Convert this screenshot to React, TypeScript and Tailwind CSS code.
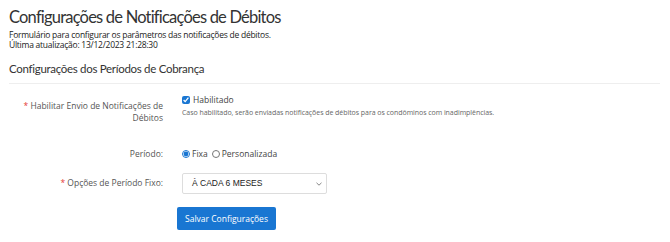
export default function App() {
  return (
    <div className="w-[670px] h-[242px] overflow-hidden bg-white text-[#333]" style={{ fontFamily: '"Open Sans", sans-serif' }}>
      <div className="pl-[9px] pr-[10px] pt-[6px]">
        <h1 className="text-[16.5px] leading-[22px] tracking-[-0.8px] text-[#333]" style={{ fontFamily: "Lato, sans-serif" }}>
          Configurações de Notificações de Débitos
        </h1>
        <p className="mt-[2px] text-[8.5px] leading-[10px] tracking-[-0.25px] text-[#222]">
          Formulário para configurar os parâmetros das notificações de débitos.
          <br />
          Última atualização: 13/12/2023 21:28:30
        </p>
        <h2 className="mt-[12px] text-[11.5px] leading-[14px] tracking-[-0.3px] text-[#333]" style={{ fontFamily: "Lato, sans-serif" }}>
          Configurações dos Períodos de Cobrança
        </h2>
        <div className="mt-[7px] h-px bg-[#eeeeee]" />

        <div className="mt-[10px] grid grid-cols-[154px_1fr] gap-x-[19px]">
          <div className="pt-[6px] text-right text-[8.5px] leading-[12px] text-[#555]">
            <span className="text-[#e53935]">*</span> Habilitar Envio de Notificações de Débitos
          </div>
          <div>
            <label className="flex items-center gap-[3px] text-[8.5px] leading-[12px] text-[#444]">
              <input type="checkbox" defaultChecked className="m-0 w-[8px] h-[8px] accent-[#1976d2]" />
              Habilitado
            </label>
            <p className="mt-[2px] text-[7px] leading-[10px] tracking-[-0.05px] text-[#666]">
              Caso habilitado, serão enviadas notificações de débitos para os condôminos com inadimplências.
            </p>
          </div>

          <div className="mt-[23px] text-right text-[8.5px] leading-[13px] text-[#555]">Período:</div>
          <div className="mt-[23px] flex items-center text-[8.5px] leading-[13px] text-[#444]">
            <label className="flex items-center gap-[2px]">
              <input type="radio" name="p" defaultChecked className="m-0 w-[8px] h-[8px] accent-[#1976d2]" />
              Fixa
            </label>
            <label className="ml-[4px] flex items-center gap-[2px]">
              <input type="radio" name="p" className="m-0 w-[8px] h-[8px]" />
              Personalizada
            </label>
          </div>

          <div className="mt-[13px] flex h-[21px] items-center justify-end text-[8.5px] text-[#555]">
            <span className="text-[#e53935]">*</span>&nbsp;Opções de Período Fixo:
          </div>
          <div className="mt-[13px]">
            <div className="w-[145px] h-[21px] border border-[#ddd] rounded-[2px] flex items-center justify-between pl-[9px] pr-[4px]">
              <span className="text-[8.5px] text-[#222]" style={{ fontFamily: '"Liberation Sans", Arial, sans-serif' }}>
                À CADA 6 MESES
              </span>
              <svg width="6" height="4" viewBox="0 0 6 4" fill="none" stroke="#777" strokeWidth="0.9">
                <path d="M0.5 0.8 L3 3.2 L5.5 0.8" />
              </svg>
            </div>
          </div>
        </div>

        <div className="mt-[13px] ml-[168px] flex">
          <button className="h-[23px] w-[99px] rounded-[2px] bg-[#1976d2] text-white text-[8.5px] leading-[23px]">
            Salvar Configurações
          </button>
        </div>
      </div>
    </div>
  );
}
